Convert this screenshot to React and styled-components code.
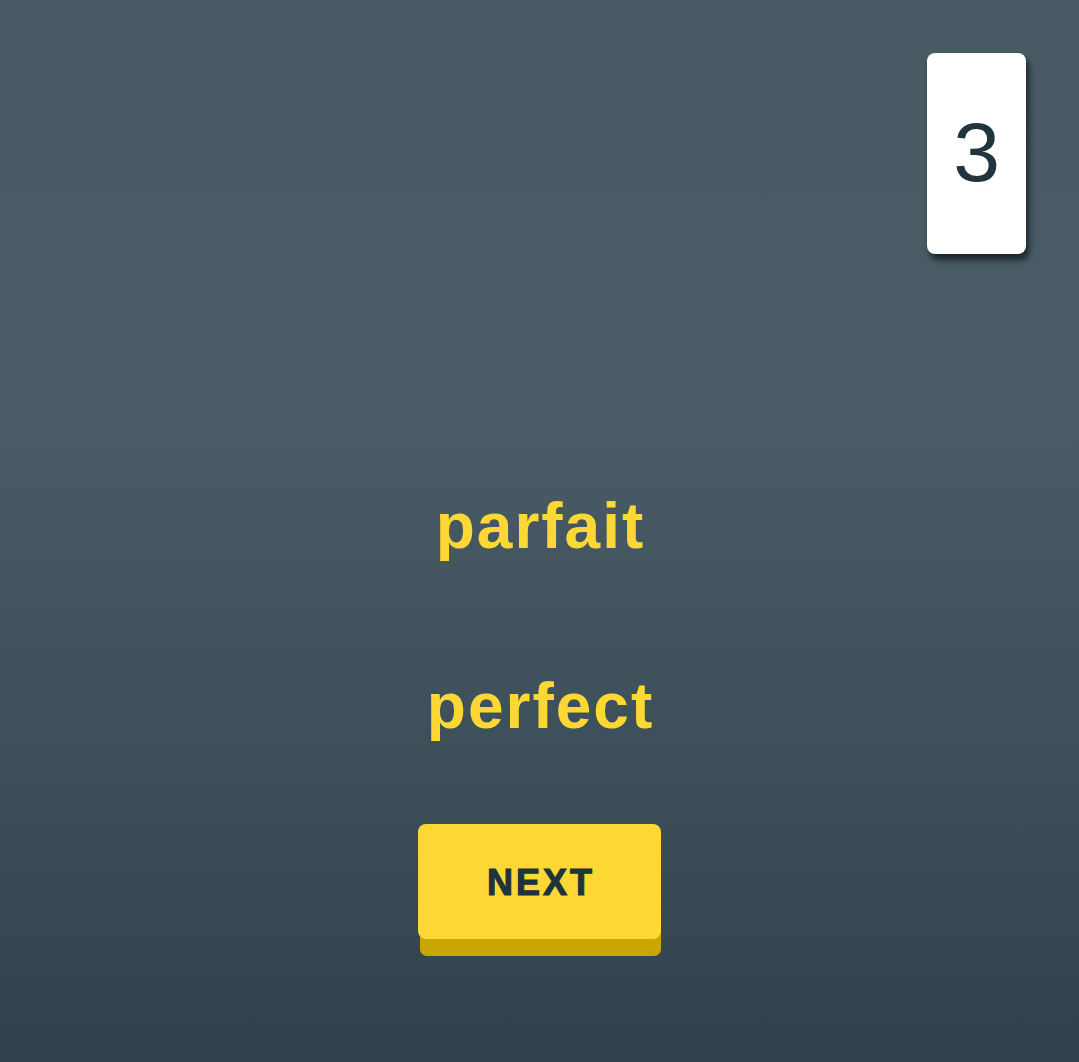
import React from "react";
import styled, { createGlobalStyle } from "styled-components";

const GlobalStyle = createGlobalStyle`
  html, body {
    margin: 0;
    padding: 0;
    height: 100%;
  }
  body {
    font-family: "Liberation Sans", Arial, sans-serif;
    background: #32434d;
  }
  #root {
    min-height: 100%;
  }
`;

const Page = styled.div`
  min-height: 100vh;
  box-sizing: border-box;
  padding: 53px 53px 0;
  background: linear-gradient(180deg, #475a64 0%, #4a5d67 38%, #31424c 100%);
  display: flex;
  flex-direction: column;
`;

const Header = styled.div`
  display: flex;
  justify-content: flex-end;
`;

const CountCard = styled.div`
  width: 99px;
  height: 201px;
  background: #ffffff;
  border-radius: 8px;
  box-shadow: 3px 6px 6px rgba(15, 24, 30, 0.8);
  display: flex;
  align-items: center;
  justify-content: center;
  font-size: 84px;
  color: #22343e;
  line-height: 1;
  padding-bottom: 3px;
  box-sizing: border-box;
`;

const Main = styled.div`
  display: flex;
  flex-direction: column;
  align-items: center;
  margin-top: 242px;
`;

const Word = styled.div`
  font-size: 64px;
  font-weight: 700;
  line-height: 60px;
  height: 60px;
  letter-spacing: 2px;
  padding-left: 2px;
  color: #fdd835;
  margin-bottom: ${(p) => p.$gap}px;
`;

const NextButton = styled.button`
  width: 243px;
  height: 115px;
  border: none;
  border-radius: 8px;
  background: #fdd835;
  box-shadow: 1px 18px 0 -1px #c8a700;
  font-family: "Liberation Sans", Arial, sans-serif;
  font-size: 36px;
  font-weight: 900;
  letter-spacing: 3px;
  color: #1f333d;
  cursor: pointer;
  padding: 2px 0 0 3px;
  -webkit-text-stroke: 1.1px #1f333d;
`;

export default function App() {
  return (
    <>
      <GlobalStyle />
      <Page>
        <Header>
          <CountCard>3</CountCard>
        </Header>
        <Main>
          <Word $gap={120}>parfait</Word>
          <Word $gap={88}>perfect</Word>
          <NextButton>NEXT</NextButton>
        </Main>
      </Page>
    </>
  );
}
